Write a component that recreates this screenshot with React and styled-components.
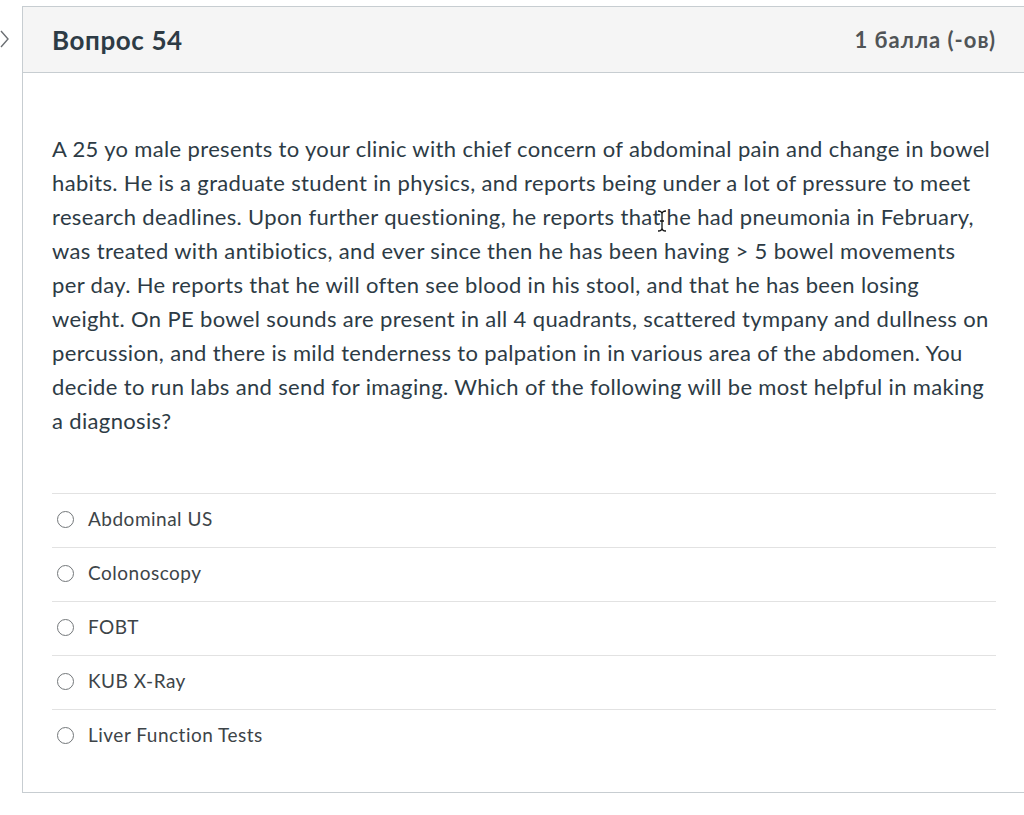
import React from "react";
import styled, { createGlobalStyle } from "styled-components";

const Global = createGlobalStyle`
  html, body {
    margin: 0;
    padding: 0;
    background: #fff;
    overflow: hidden;
  }
  body {
    font-family: Lato, "Noto Sans", sans-serif;
    color: #2d3b45;
  }
`;

const Page = styled.div`
  display: flex;
  align-items: flex-start;
  padding-top: 6px;
  width: 1040px;
`;

const Toggle = styled.div`
  width: 22px;
  height: 66px;
  display: flex;
  align-items: center;
  flex-shrink: 0;
`;

const Card = styled.section`
  width: 1010px;
  flex-shrink: 0;
  border: 1px solid #c7cdd1;
  box-sizing: border-box;
  background: #fff;
`;

const Header = styled.header`
  height: 65px;
  background: #f5f5f5;
  border-bottom: 1px solid #c7cdd1;
  display: flex;
  align-items: center;
  justify-content: space-between;
  padding: 0 35px 0 29px;
`;

const Title = styled.h2`
  margin: 0;
  font-size: 26px;
  letter-spacing: 0.6px;
  font-weight: 700;
  color: #2d3b45;
`;

const Points = styled.div`
  font-size: 22px;
  letter-spacing: 1px;
  font-weight: 700;
  color: #505457;
`;

const Body = styled.div`
  padding: 59px 35px 29px 29px;
`;

const Question = styled.p`
  position: relative;
  margin: 0 0 55px;
  font-size: 22px;
  letter-spacing: 0.35px;
  line-height: 34px;
  color: #2d3b45;
  white-space: nowrap;
`;

const Cursor = styled.svg`
  position: absolute;
  left: 605px;
  top: 78px;
`;

const Answers = styled.div`
  display: flex;
  flex-direction: column;
`;

const Answer = styled.label`
  display: flex;
  align-items: center;
  gap: 14px;
  height: 53px;
  box-sizing: border-box;
  height: 54px;
  padding: 0 0 4px 5px;
  border-top: 1px solid #e2e2e2;
  font-size: 19px;
  letter-spacing: 0.5px;
  color: #3d4448;
`;

const Radio = styled.span`
  width: 15px;
  height: 15px;
  margin-top: 2px;
  border: 1px solid #73777a;
  border-radius: 50%;
  flex-shrink: 0;
`;

const LINES = [
  "A 25 yo male presents to your clinic with chief concern of abdominal pain and change in bowel",
  "habits. He is a graduate student in physics, and reports being under a lot of pressure to meet",
  "research deadlines. Upon further questioning, he reports that he had pneumonia in February,",
  "was treated with antibiotics, and ever since then he has been having > 5 bowel movements",
  "per day. He reports that he will often see blood in his stool, and that he has been losing",
  "weight. On PE bowel sounds are present in all 4 quadrants, scattered tympany and dullness on",
  "percussion, and there is mild tenderness to palpation in in various area of the abdomen. You",
  "decide to run labs and send for imaging. Which of the following will be most helpful in making",
  "a diagnosis?",
];

const ANSWERS = [
  "Abdominal US",
  "Colonoscopy",
  "FOBT",
  "KUB X-Ray",
  "Liver Function Tests",
];

export default function App() {
  return (
    <>
      <Global />
      <Page>
        <Toggle>
          <svg width="10" height="20" viewBox="0 0 10 20">
            <path d="M1 2 L8 10 L1 18" fill="none" stroke="#6b6f73" strokeWidth="1.4" />
          </svg>
        </Toggle>
        <Card>
          <Header>
            <Title>Вопрос 54</Title>
            <Points>1 балла (-ов)</Points>
          </Header>
          <Body>
            <Question>
              {LINES.map((l, i) => (
                <React.Fragment key={i}>
                  {l}
                  {i < LINES.length - 1 && <br />}
                </React.Fragment>
              ))}
              <Cursor width="10" height="22" viewBox="0 0 10 22">
                <path d="M1 1 Q5 1 5 4 L5 18 Q5 21 1 21 M9 1 Q5 1 5 4 M5 18 Q5 21 9 21 M3 11 L7 11" fill="none" stroke="#111" strokeWidth="1.3" />
              </Cursor>
            </Question>
            <Answers>
              {ANSWERS.map((a) => (
                <Answer key={a}>
                  <Radio />
                  {a}
                </Answer>
              ))}
            </Answers>
          </Body>
        </Card>
      </Page>
    </>
  );
}
